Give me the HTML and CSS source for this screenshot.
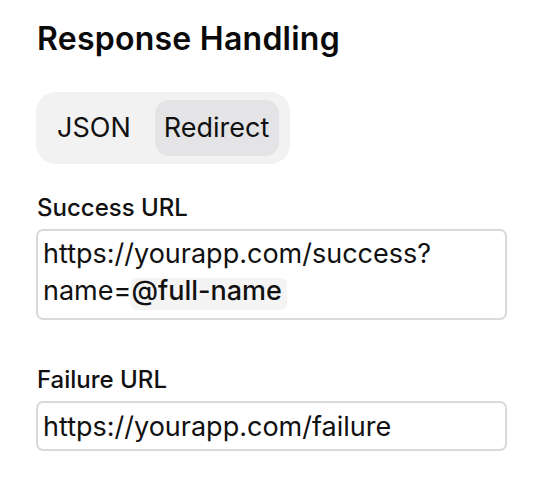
FILE: index.html
```html
<!DOCTYPE html>
<html>
<head>
<meta charset="utf-8">
<link rel="stylesheet" href="styles.css">
</head>
<body>
<div class="panel">
  <h2 class="title">Response Handling</h2>
  <div class="seg">
    <span class="seg-item">JSON</span>
    <span class="seg-item active">Redirect</span>
  </div>
  <div class="field">
    <label class="label">Success URL</label>
    <div class="input multi">https://yourapp.com/success?<br>name=<span class="chip">@full-name</span></div>
  </div>
  <div class="field second">
    <label class="label">Failure URL</label>
    <div class="input single">https://yourapp.com/failure</div>
  </div>
</div>
</body>
</html>
```

FILE: styles.css
```css
html, body {
  margin: 0;
  background: #ffffff;
}
body {
  font-family: Inter, "Noto Sans", sans-serif;
  color: #0d0d0d;
}
.panel {
  padding: 19px 41px 0 36px;
  display: flex;
  flex-direction: column;
  align-items: flex-start;
}
.title {
  margin: 0 0 0 1px;
  font-size: 32px;
  line-height: 40px;
  font-weight: 600;
  letter-spacing: 0.25px;
  color: #0a0a0a;
}
.seg {
  margin-top: 33px;
  display: flex;
  align-items: center;
  gap: 14px;
  background: #f2f2f3;
  border-radius: 20px;
  padding: 8px 11px;
}
.seg-item {
  font-size: 27px;
  line-height: 56px;
  padding: 0 10px;
  border-radius: 14px;
  color: #111;
}
.seg-item.active {
  background: #e4e4e7;
  padding: 0 10px 0 9px;
}
.field {
  margin-top: 29px;
  width: 100%;
  display: flex;
  flex-direction: column;
}
.field.second {
  margin-top: 45px;
}
.label {
  font-size: 24px;
  line-height: 30px;
  font-weight: 500;
  margin-left: 1px;
  color: #111;
}
.input {
  margin-top: 6px;
  border: 2px solid #d9d9de;
  border-radius: 7px;
  font-size: 27px;
  line-height: 37px;
  color: #111;
}
.input.multi {
  padding: 4px 5px 8px;
}
.input.single {
  padding: 5px 5px 4px;
}
.chip {
  display: inline-block;
  background: #f4f4f5;
  border-radius: 6px;
  line-height: 26px;
  padding: 0 5px 6px 0;
  font-weight: 500;
}
```
